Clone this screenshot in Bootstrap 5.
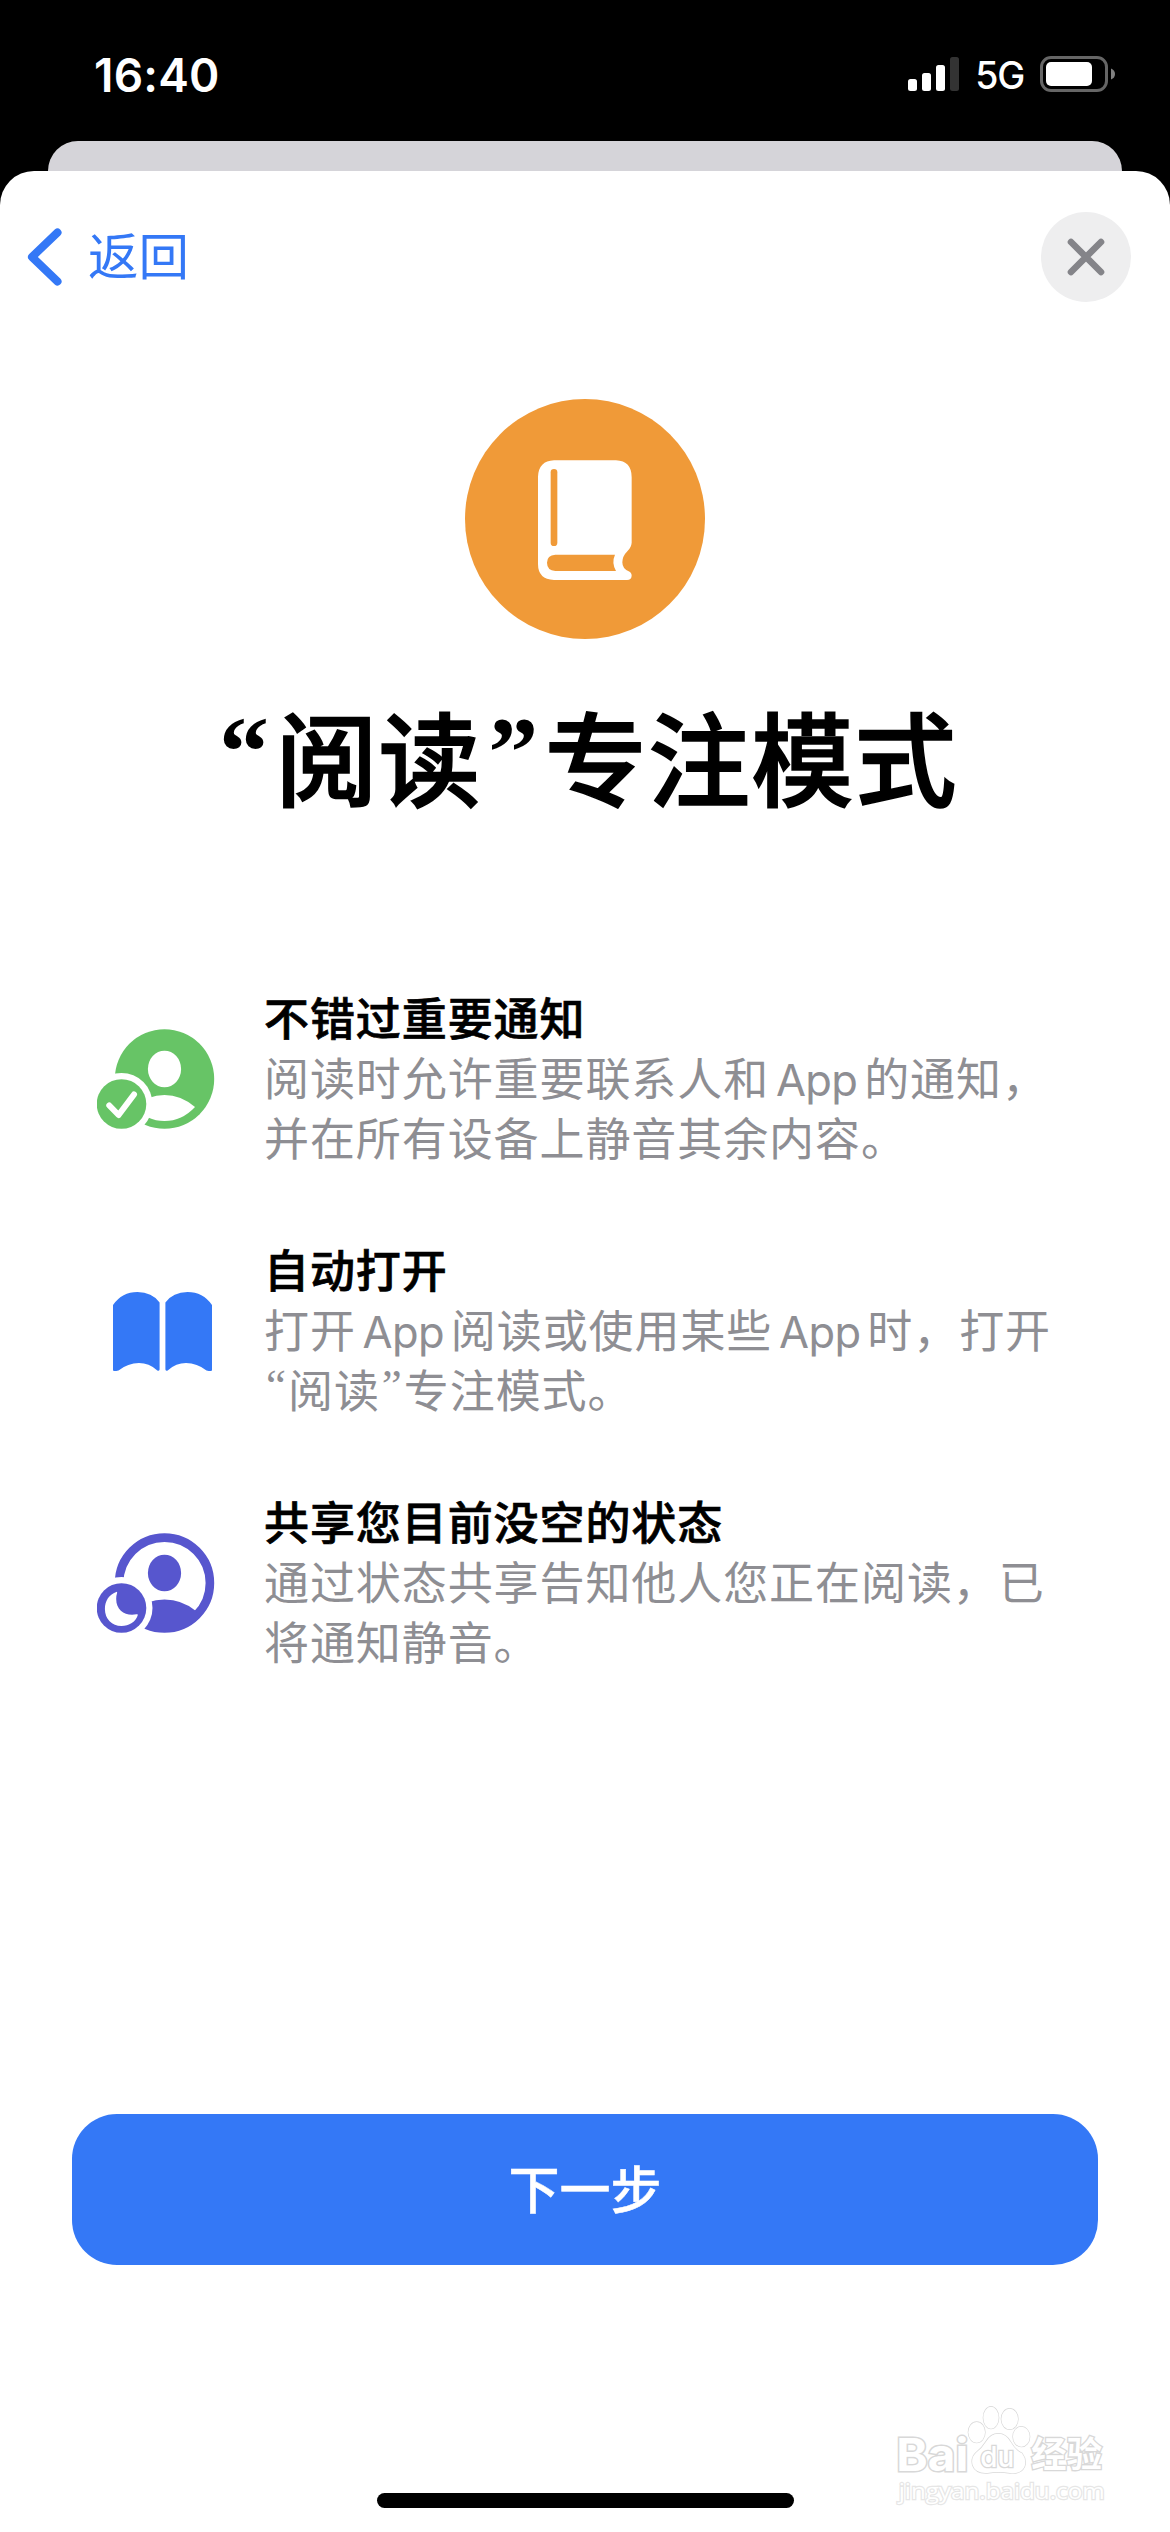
<!DOCTYPE html>
<html lang="zh-CN">
<head>
<meta charset="utf-8">
<meta name="viewport" content="width=device-width, initial-scale=1">
<title>“阅读”专注模式</title>
<link href="https://cdn.jsdelivr.net/npm/bootstrap@5.3.0/dist/css/bootstrap.min.css" rel="stylesheet">
<style>
  body { background: #000; font-family: "Noto Sans CJK SC", sans-serif; color: #000; }
  svg { display: block; flex: none; }
  .phone { width: 1170px; height: 2532px; background: #000; overflow: hidden; }
  .status { height: 141px; padding: 0 55px 0 94px; font-family: Inter, sans-serif; color: #fff; }
  .status-row { height: 148px; }
  .clock { font-size: 46px; font-weight: 600; line-height: 1; letter-spacing: .2px; padding-top: 2px; }
  .net { font-size: 37.5px; font-weight: 500; line-height: 1; margin: 3px 16px 0 15px; letter-spacing: -1.2px; }
  .peek { height: 30px; margin: 0 48px; background: #d5d4d9; border-radius: 30px 30px 0 0; }
  .sheet { height: 2361px; background: #fff; border-radius: 34px 34px 0 0; padding-top: 41px; }
  .top-row { height: 90px; padding: 0 39px 0 27px; }
  .back { color: #3478f6; font-size: 50.5px; line-height: 82px; gap: 25px; height: 86px; }
  .back span { height: 90px; }
  .close-btn { width: 90px; height: 90px; background: #eeeeef; }
  .hero { margin-top: 97px; }
  .headline { margin: 46px 0 4px; font-size: 102px; line-height: 140px; font-weight: 500; letter-spacing: 1.2px; white-space: nowrap; -webkit-text-stroke: 1.6px #000; }
  .q { display: inline-block; line-height: 0; text-align: center; letter-spacing: 0; font-family: "Liberation Serif", serif; }
  .headline .q { width: 63px; font-weight: 700; vertical-align: 14px; font-size: 100px; -webkit-text-stroke: 0; }
  .features { margin: 158px 0 2px 97px; gap: 72px; }
  .feature { height: 180px; }
  .feature-icon { width: 167px; padding-top: 4px; }
  .feature-text { font-size: 45px; line-height: 60px; letter-spacing: .92px; color: #8e8e93; white-space: nowrap; }
  .feature-text strong { display: block; color: #000; font-weight: 500; -webkit-text-stroke: .7px #000; }
  .feature-text .q { width: 24px; vertical-align: 8px; }
  .app { display: inline-block; width: 95px; text-align: center; font-family: Inter, sans-serif; font-size: 43.5px; letter-spacing: -.6px; line-height: 1; }
  .next { margin: 441px 72px 0; height: 151px; border-radius: 45px; background: #3478f6; color: #fff; font-size: 51px; font-weight: 500; border: 0; padding: 0 0 4px; -webkit-text-stroke: .5px #fff; }
  .home-bar { width: 417px; height: 15px; border-radius: 8px; background: #000; margin-bottom: 24px; }
  .wm { left: 860px; top: 2380px; }
</style>
</head>
<body>
<div class="phone position-relative d-flex flex-column">
  <header class="status">
    <div class="status-row d-flex align-items-center">
      <div class="clock me-auto">16:40</div>
      <svg width="52" height="34" viewBox="0 0 52 34" fill="#fff">
        <rect x="0" y="22" width="9" height="12" rx="2.5"/><rect x="14" y="16" width="9" height="18" rx="2.5"/>
        <rect x="28" y="8" width="9" height="26" rx="2.5"/><rect x="42" y="0" width="9" height="34" rx="2.5" fill="#333"/>
      </svg>
      <div class="net">5G</div>
      <svg width="75" height="36" viewBox="0 0 75 36">
        <rect x="1.5" y="1.5" width="65" height="33" rx="9.5" fill="none" stroke="#666" stroke-width="3"/>
        <rect x="6" y="6" width="46" height="24" rx="5" fill="#fff"/>
        <path d="M71 12.500Q75 14 75 18T71 23.500Z" fill="#808080"/>
      </svg>
    </div>
  </header>
  <div class="peek"></div>
  <main class="sheet d-flex flex-column">
    <div class="top-row d-flex align-items-center justify-content-between">
      <a class="back d-flex align-items-center text-decoration-none" href="#">
        <svg width="36" height="58" viewBox="0 0 36 58"><path d="M30.500 4.500 5 29 30.500 53.500" fill="none" stroke="#3478f6" stroke-width="8" stroke-linecap="round" stroke-linejoin="round"/></svg>
        <span>返回</span>
      </a>
      <button class="close-btn btn rounded-circle border-0 p-0 d-flex align-items-center justify-content-center" type="button" aria-label="关闭">
        <svg width="38" height="38" viewBox="0 0 38 38"><path d="M4 4 34 34M34 4 4 34" stroke="#848489" stroke-width="6.600" stroke-linecap="round"/></svg>
      </button>
    </div>

    <svg class="hero align-self-center" width="240" height="240" viewBox="75 57 720 720">
      <circle cx="435" cy="417" r="360" fill="#f09a38"/>
      <path fill="#fff" d="M342 241H528Q575 243 575 292V488Q574 502 562 514Q547 529 547 547Q547 566 566 574Q575 578 575 587Q574 600 561 600H342Q294 598 294 552V290Q296 243 342 241Z"/>
      <path fill="#f09a38" d="M346 524H525Q514 548 528 573H346Q321 571 321 548T346 524Z"/>
      <rect x="332" y="267" width="20" height="231" rx="10" fill="#f09a38"/>
    </svg>
    <h1 class="headline text-center"><span class="q">“</span>阅读<span class="q">”</span>专注模式</h1>

    <section class="features d-flex flex-column">
      <div class="feature d-flex align-items-center">
        <div class="feature-icon">
          <svg width="118" height="100" viewBox="0 0 118 100">
            <mask id="cut"><rect width="118" height="100" fill="#fff"/><circle cx="24.500" cy="75" r="31" fill="#000"/></mask>
            <g mask="url(#cut)">
              <circle cx="67.500" cy="50" r="49.700" fill="#67c466"/>
              <ellipse cx="67.500" cy="40" rx="16.600" ry="18.300" fill="#fff"/>
              <path d="M37 78Q51 66 67.500 66T98 78Q85 92 67.500 92T37 78Z" fill="#fff"/>
            </g>
            <circle cx="24.500" cy="75" r="24.800" fill="#67c466"/>
            <path d="M12.300 76.500 21.600 86 37 65.500" fill="none" stroke="#fff" stroke-width="6" stroke-linecap="round" stroke-linejoin="round"/>
          </svg>
        </div>
        <div class="feature-text"><strong>不错过重要通知</strong>阅读时允许重要联系人和<span class="app">App</span>的通知，<br>并在所有设备上静音其余内容。</div>
      </div>
      <div class="feature d-flex align-items-center">
        <div class="feature-icon ps-3">
          <svg width="99" height="79" viewBox="0 0 99 79" fill="#3478f6">
            <path id="page" d="M0 13Q9 0 24.500 0Q39 0 46.600 10.500V77.500Q46 79.500 44 78.200Q36 71 26 71Q15 71 5.500 78.500Q0 80 0 78Z"/>
            <use href="#page" transform="matrix(-1 0 0 1 99 0)"/>
          </svg>
        </div>
        <div class="feature-text"><strong>自动打开</strong>打开<span class="app">App</span>阅读或使用某些<span class="app">App</span>时，打开<br><span class="q">“</span>阅读<span class="q">”</span>专注模式。</div>
      </div>
      <div class="feature d-flex align-items-center">
        <div class="feature-icon">
          <svg width="118" height="100" viewBox="0 0 118 100" fill="#5756ce">
            <g mask="url(#cut)">
              <circle cx="67.500" cy="50" r="45.400" fill="none" stroke="#5756ce" stroke-width="8.600"/>
              <ellipse cx="67.500" cy="40" rx="16.600" ry="18.300"/>
              <path d="M36 78Q50 66.500 67.500 66.500T99 78L102 85A49.700 49.700 0 0 1 33 85Z"/>
            </g>
            <circle cx="24.500" cy="75" r="24.800"/>
            <path fill="#fff" d="M19.800 58.800C12 61.500 7.900 68 7.900 76C7.900 86 15 93 24.500 93C32 93 39 89 40.900 81.800Q40.700 81 39.500 81.300C29 83.500 19.200 78 19.200 66Q19.200 62.500 20.200 59.500Z"/>
          </svg>
        </div>
        <div class="feature-text"><strong>共享您目前没空的状态</strong>通过状态共享告知他人您正在阅读，已<br>将通知静音。</div>
      </div>
    </section>

    <button class="next btn" type="button">下一步</button>
    <div class="home-bar align-self-center mt-auto"></div>
  </main>

  <svg class="wm position-absolute" width="310" height="152" viewBox="0 0 930 456" fill="#fff" stroke="#d8d8d8" stroke-width="4" paint-order="stroke">
    <g font-family="Inter, sans-serif" font-weight="700">
      <text x="109" y="273" font-size="136" textLength="216" lengthAdjust="spacingAndGlyphs" stroke-width="9">Bai</text>
    </g>
    <ellipse cx="350" cy="157" rx="25" ry="31"/><ellipse cx="393" cy="113" rx="23" ry="33"/>
    <ellipse cx="449" cy="117" rx="25" ry="31"/><ellipse cx="484" cy="170" rx="25" ry="30"/>
    <path d="M415 161Q438 161 452 186T486 220Q501 240 493 261Q482 283 450 279Q415 273 382 279Q347 281 338 256Q332 233 348 218Q366 205 378 185Q392 161 415 161Z"/>
    <text x="361" y="260" font-family="Inter, sans-serif" font-size="86" font-weight="500" textLength="102" lengthAdjust="spacingAndGlyphs" stroke-width="8">du</text>
    <text x="514" y="262" font-family="Noto Sans CJK SC, sans-serif" font-weight="700" font-size="106" textLength="212" lengthAdjust="spacingAndGlyphs" stroke-width="8">经验</text>
    <text x="116" y="358" font-family="Open Sans, sans-serif" font-size="68" textLength="618" lengthAdjust="spacingAndGlyphs" stroke="#e6e6e6" stroke-width="7">jingyan.baidu.com</text>
  </svg>
</div>
<script src="https://cdn.jsdelivr.net/npm/bootstrap@5.3.0/dist/js/bootstrap.bundle.min.js"></script>
</body>
</html>
